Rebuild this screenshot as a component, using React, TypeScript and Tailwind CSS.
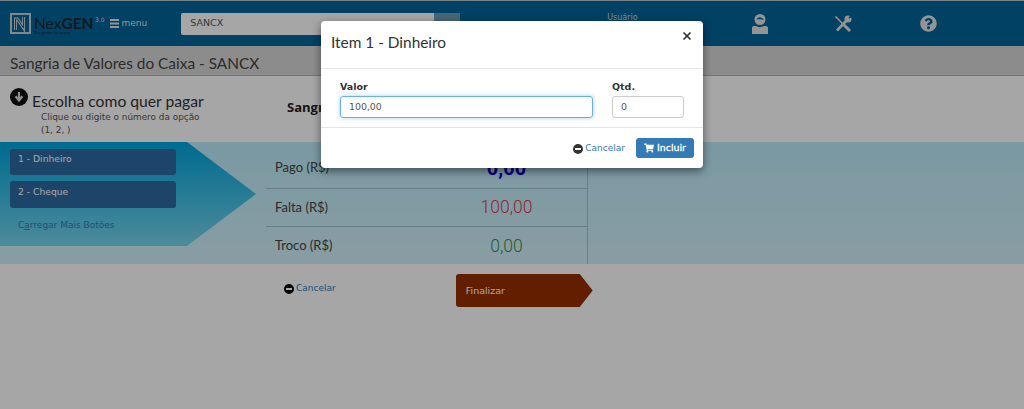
import { X } from "lucide-react";
import { FaShoppingCart, FaQuestionCircle } from "react-icons/fa";

const dejavu = { fontFamily: '"DejaVu Sans", sans-serif' };
const lato = { fontFamily: 'Lato, sans-serif' };
const roboto = { fontFamily: 'Roboto, sans-serif' };

function CircleArrowDown() {
  return (
    <svg width="18" height="18" viewBox="0 0 18 18" className="shrink-0">
      <circle cx="9" cy="9" r="9" fill="#111" />
      <path d="M9 4v7M5.6 8.2 9 12.4l3.4-4.2" stroke="#ddd" strokeWidth="2.2" fill="none" />
    </svg>
  );
}

function MinusCircle({ color }: { color: string }) {
  return (
    <svg width="10" height="10" viewBox="0 0 10 10" className="shrink-0">
      <circle cx="5" cy="5" r="5" fill={color} />
      <rect x="2" y="4" width="6" height="2" fill="#fff" />
    </svg>
  );
}

function Row({ label, value, cls, className }: { label: string; value: string; cls: string; className: string }) {
  return (
    <div className={`flex items-center ${className}`}>
      <span className="w-[150px] pl-[9px] text-[13px] text-[#444]" style={lato}>{label}</span>
      <span className={`flex-1 pl-[10px] text-center ${cls}`} style={roboto}>{value}</span>
    </div>
  );
}

export default function App() {
  return (
    <div className="relative h-[409px] w-[1024px] overflow-hidden bg-white" style={dejavu}>
      <header className="flex h-[46px] items-center border-t border-[#b5c7d1] bg-[#00649a]">
        <div className="ml-[10px] flex items-center">
          <svg width="21" height="21" viewBox="0 0 21 21">
            <rect x="1" y="1" width="19" height="19" fill="none" stroke="#c5ced5" strokeWidth="2" />
            <path d="M5.500 17V6h2l6 9V4" fill="none" stroke="#c5ced5" strokeWidth="3" />
            <path d="M5.500 17V6h2l6 9V4" fill="none" stroke="#00649a" strokeWidth="1" />
          </svg>
          <div className="ml-[3px] flex w-[61px] flex-col pt-[3px] text-[#1c2730]">
            <div className="text-[15.500px] leading-[15px]" style={lato}>
              Nex<b>GEN</b>
            </div>
            <span className="whitespace-nowrap text-[4px] leading-[4px]" style={lato}>Seu gestor na nuvem</span>
          </div>
          <span className="-mt-[8px] text-[6px] text-[#cfdae0]">3.0</span>
        </div>
        <svg width="9" height="9" viewBox="0 0 9 9" className="ml-[5px]" fill="#dfe5e9">
          <rect width="9" height="2" />
          <rect y="3.500" width="9" height="2" />
          <rect y="7" width="9" height="2" />
        </svg>
        <span className="ml-[3px] text-[9px] text-[#dfe5e9]">menu</span>
        <div className="ml-[34px] flex h-[22px] w-[253px] items-center rounded-l-[2px] bg-white pl-[9px] text-[9.500px] text-[#555]">
          SANCX
        </div>
        <div className="h-[22px] w-[26px] bg-[#6e9db8]" />
        <span className="ml-[147px] -mt-[12px] text-[8px] text-[#cfdae0]">Usuário</span>
        <div className="ml-[113px] flex items-center text-white">
          <svg width="18" height="20" viewBox="0 0 18 20" fill="#e4e4e4">
            <path d="M9 0a5.500 5.500 0 1 1 0 11A5.500 5.500 0 0 1 9 0Z" />
            <path d="M5.500 5.500C7 2.500 11 2.600 12.800 6 11 5.200 7.600 5 5.500 5.500Z" fill="#00649a" />
            <path d="M1 20v-6c0-1 .8-2 2-2h2.600c1.200 1.600 5.600 1.600 6.800 0H15c1.200 0 2 1 2 2v6H1Z" />
          </svg>
          <svg width="18" height="18" viewBox="0 0 18 18" fill="none" className="ml-[65px]">
            <path d="M1.500 1.500 9 9" stroke="#e4e4e4" strokeWidth="1.600" />
            <path d="M9 9 16 16" stroke="#e4e4e4" strokeWidth="3" />
            <path d="M3 15.500 12.500 5.500" stroke="#e4e4e4" strokeWidth="2.600" />
            <circle cx="14" cy="4" r="3.500" fill="#e4e4e4" />
            <path d="M14.300 3.700 16.500 -.5 19 2Z" fill="#00649a" />
          </svg>
          <FaQuestionCircle size={17} className="ml-[68px] text-[#e4e4e4]" />
        </div>
      </header>

      <div className="flex h-[30px] items-center border-b border-[#b3b3b3] bg-[#d8d8d8] pl-[10px] pt-[6px] text-[15.400px] text-[#444]" style={lato}>
        Sangria de Valores do Caixa - SANCX
      </div>

      <div className="flex h-[66px]">
        <div className="w-[266px] pl-[10px] pt-[12px]">
          <div className="flex">
            <CircleArrowDown />
            <div className="ml-[4px]">
              <div className="mt-[4px] text-[15.700px] leading-[18px] text-[#333]" style={lato}>Escolha como quer pagar</div>
              <div className="ml-[9px] mt-[1px] text-[8.900px] leading-[13px] text-[#555]">
                Clique ou digite o número da opção
                <br />
                (1, 2, )
              </div>
            </div>
          </div>
        </div>
        <div className="pl-[21px] pt-[22px] text-[13px] font-bold text-[#222]" style={{ fontFamily: '"Open Sans", sans-serif' }}>Sangria</div>
      </div>

      <div className="flex h-[122px] bg-[linear-gradient(#bcecfb,#d2f1fa)]">
        <div className="h-[104px] w-[256px] bg-[linear-gradient(#00a5dd,#77d6ee)] pl-[10px] pt-[7px] [clip-path:polygon(0_0,187px_0,100%_50%,187px_100%,0_100%)]">
          <div className="flex h-[26px] w-[166px] items-center rounded-[3px] bg-[#2d6aa3] pb-[6px] pl-[8px] text-[9.200px] text-white">1 - Dinheiro</div>
          <div className="mt-[6px] flex h-[27px] w-[166px] items-center rounded-[3px] bg-[#2d6aa3] pb-[6px] pl-[8px] text-[9.200px] text-white">2 - Cheque</div>
          <div className="ml-[8px] mt-[11px] text-[9px] text-[#337ab7]">
            C<u>a</u>rregar Mais Botões
          </div>
        </div>
        <div className="ml-[10px] w-[322px] border-r border-[#9cc6cc]">
          <Row label="Pago (R$)" value="0,00" cls="text-[20px] font-bold text-[#0000d0]" className="h-[47px] border-b border-[#9cc6cc] pt-[6px]" />
          <Row label="Falta (R$)" value="100,00" cls="text-[17.500px] font-light text-[#d93a50]" className="h-[38px] border-b border-[#9cc6cc]" />
          <Row label="Troco (R$)" value="0,00" cls="text-[17.500px] font-light text-[#3a8f3f]" className="h-[37px] pt-[1px]" />
        </div>
      </div>

      <div className="flex pt-[10px]">
        <div className="ml-[284px] flex h-[33px] items-center gap-[2px] pb-[4px] text-[9px] text-[#337ab7]">
          <MinusCircle color="#000" />
          <span>Cancelar</span>
        </div>
        <div className="ml-[120px] flex h-[33px] w-[137px] items-center rounded-l-[3px] bg-[#982f00] pl-[10px] pt-[2px] text-[9.500px] text-white [clip-path:polygon(0_0,124px_0,100%_50%,124px_100%,0_100%)]">
          Finalizar
        </div>
      </div>

      <div className="absolute inset-0 bg-black/35" />

      <div className="absolute left-[321px] top-[21px] w-[382px] rounded-[4px] bg-white shadow-[0_3px_9px_rgba(0,0,0,0.5)]">
        <div className="relative h-[48px] border-b border-[#e5e5e5] px-[10px] pt-[11px] text-[15.400px] leading-[20px] text-[#333]" style={lato}>
          Item 1 - Dinheiro
          <X className="absolute right-[10px] top-[9px] text-[#333]" size={12} strokeWidth={3.5} />
        </div>
        <div className="flex h-[59px] border-b border-[#e5e5e5] pl-[19px] pt-[11px]">
          <div className="w-[253px]">
            <label className="block text-[9.500px] font-bold leading-[14px] text-[#333]">Valor</label>
            <div className="mt-[2px] flex h-[22px] items-center rounded-[3px] border border-[#66afe9] pl-[8px] text-[9.400px] text-[#555] shadow-[0_0_4px_rgba(102,175,233,0.6)]">
              100,00
            </div>
          </div>
          <div className="ml-[19px] w-[72px]">
            <label className="block text-[9.500px] font-bold leading-[14px] text-[#333]">Qtd.</label>
            <div className="mt-[2px] flex h-[22px] items-center rounded-[3px] border border-[#ccc] pl-[8px] text-[9.400px] text-[#555]">
              0
            </div>
          </div>
        </div>
        <div className="flex h-[40px] items-center justify-end gap-[11px] pr-[9px]">
          <div className="flex items-center gap-[2px] pt-[1px] text-[9px] text-[#337ab7]">
            <MinusCircle color="#333" />
            <span>Cancelar</span>
          </div>
          <div className="flex h-[20px] w-[58px] items-center justify-center gap-[3px] rounded-[3px] bg-[#337ab7] text-[9.400px] text-white [-webkit-text-stroke:0.3px_white]">
            <FaShoppingCart size={10} />
            Incluir
          </div>
        </div>
      </div>
    </div>
  );
}
